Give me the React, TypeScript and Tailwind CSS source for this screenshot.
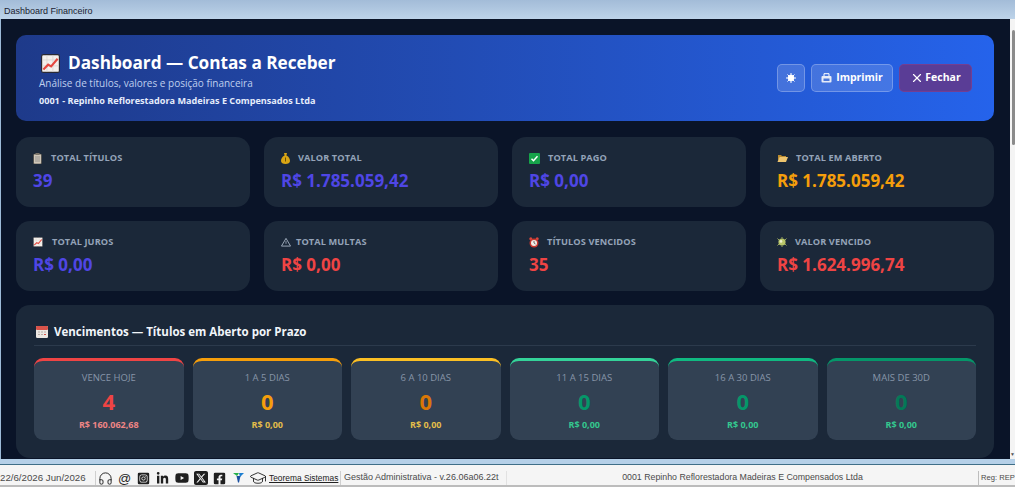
import { Headphones, GraduationCap, X } from 'lucide-react'
import { FaInstagramSquare, FaLinkedinIn, FaYoutube, FaFacebookSquare } from 'react-icons/fa'
import { FaSquareXTwitter } from 'react-icons/fa6'
import type { ReactNode } from 'react'

const ChartIcon = ({ size = 12 }: { size?: number }) => (
  <svg width={size} height={size} viewBox="0 0 16 16" className="shrink-0">
    <rect x="0.5" y="0.5" width="15" height="15" rx="1.5" fill="#f4f1ec" stroke="#2a2a33" />
    <path d="M5 1v14M10 1v14M1 5h14M1 10h14" stroke="#d8d4ce" strokeWidth="0.6" />
    <path d="M2 13l4-4 2.5 1.5L14 4" stroke="#e5483f" strokeWidth="1.8" fill="none" />
  </svg>
)

const ClipboardIcon = () => (
  <svg width="9" height="11" viewBox="0 0 9 11" className="shrink-0">
    <rect x="0.5" y="1" width="8" height="10" rx="1" fill="#cfc6b8" stroke="#3a3733" strokeWidth="0.6" />
    <rect x="2.5" y="0" width="4" height="2" fill="#7a7368" />
    <path d="M2 4h5M2 6h5M2 8h5" stroke="#7d7d7d" strokeWidth="0.7" />
  </svg>
)

const MoneyIcon = () => (
  <svg width="9" height="11" viewBox="0 0 9 11" className="shrink-0">
    <path d="M3 0h3L5.4 2.4C8 3.4 9 6 9 8c0 2-2 3-4.500 3S0 10 0 8c0-2 1-4.600 3.600-5.600z" fill="#d9a514" />
    <path d="M4.500 4.500v4" stroke="#6b4e05" strokeWidth="1" />
  </svg>
)

const CheckIcon = () => (
  <svg width="11" height="11" viewBox="0 0 11 11" className="shrink-0">
    <rect width="11" height="11" rx="1" fill="#16a34a" />
    <path d="M2.500 5.700l2 2 4-4.500" stroke="#fff" strokeWidth="1.500" fill="none" />
  </svg>
)

const FolderIcon = () => (
  <svg width="11" height="8" viewBox="0 0 11 8" className="shrink-0">
    <path d="M1 1h3l1 1h4v1H3L1 7z" fill="#b98a2e" />
    <path d="M2.500 3H11L9 8H0.500z" fill="#eec46e" />
  </svg>
)

const WarnIcon = () => (
  <svg width="10" height="10" viewBox="0 0 11 10" className="shrink-0">
    <path d="M5.500 1L10.500 9.500H0.500z" fill="none" stroke="#9aa6b6" strokeWidth="1.100" />
    <path d="M5.500 4v3" stroke="#9aa6b6" strokeWidth="1" />
  </svg>
)

const ClockIcon = () => (
  <svg width="10" height="11" viewBox="0 0 10 11" className="shrink-0">
    <circle cx="1.800" cy="1.800" r="1.500" fill="#d9453c" />
    <circle cx="8.200" cy="1.800" r="1.500" fill="#d9453c" />
    <circle cx="5" cy="6" r="4.500" fill="#c8382f" />
    <circle cx="5" cy="6" r="3" fill="#f2ece6" />
    <path d="M5 4v2l1.500 1" stroke="#333" strokeWidth="0.7" fill="none" />
  </svg>
)

const BugIcon = () => (
  <svg width="10" height="10" viewBox="0 0 10 10" className="shrink-0">
    <circle cx="5" cy="5" r="3.600" fill="#b9c66a" />
    <circle cx="4" cy="4.400" r="1.300" fill="#eef0cf" />
    <path d="M0.500 1.500l2 2M9.500 1.500l-2 2M0.500 8.500l2-2M9.500 8.500l-2-2M5 0v1.500M5 8.500V10" stroke="#b9c66a" strokeWidth="0.8" />
  </svg>
)

const CalendarIcon = () => (
  <svg width="12" height="12" viewBox="0 0 12 12" className="shrink-0">
    <rect width="12" height="12" rx="1.200" fill="#ece7e2" />
    <rect width="12" height="4" rx="1" fill="#d9534a" />
    <path d="M2 6h2M5 6h2M8 6h2M2 8.500h2M5 8.500h2" stroke="#b7aea8" strokeWidth="1" />
    <path d="M8 8.500h2" stroke="#d9534a" strokeWidth="1" />
  </svg>
)

const SunIcon = () => (
  <svg width="10" height="10" viewBox="0 0 10 10">
    <circle cx="5" cy="5" r="3.200" fill="#fff" />
    <path d="M5 0v10M0 5h10M1.500 1.500l7 7M8.500 1.500l-7 7" stroke="#fff" strokeWidth="1" />
  </svg>
)

const PrinterIcon = () => (
  <svg width="11" height="10" viewBox="0 0 11 10">
    <path d="M3 3V0.700h5V3" fill="none" stroke="#fff" strokeWidth="1" />
    <rect x="0.500" y="3" width="10" height="6.500" rx="1" fill="#e6ebf7" />
    <rect x="2.500" y="5.500" width="6" height="2.500" fill="#4a76d8" />
  </svg>
)

const FunnelIcon = () => (
  <svg width="11" height="10" viewBox="0 0 11 10">
    <path d="M0 0h6L4 3z" fill="#25b04a" />
    <path d="M6 0h5L7 4z" fill="#1d7fd1" />
    <path d="M3.500 3h4L6 9.500H5z" fill="#1a4fa0" />
  </svg>
)

const stats: { icon: ReactNode; label: string; value: string; color: string; gap: string }[] = [
  { icon: <ClipboardIcon />, label: 'Total Títulos', value: '39', color: 'text-[#4f46e5]', gap: 'gap-[9px]' },
  { icon: <MoneyIcon />, label: 'Valor Total', value: 'R$ 1.785.059,42', color: 'text-[#4f46e5]', gap: 'gap-[8px]' },
  { icon: <CheckIcon />, label: 'Total Pago', value: 'R$ 0,00', color: 'text-[#4f46e5]', gap: 'gap-[8px]' },
  { icon: <FolderIcon />, label: 'Total em Aberto', value: 'R$ 1.785.059,42', color: 'text-[#f59e0b]', gap: 'gap-[8px]' },
  { icon: <ChartIcon size={10} />, label: 'Total Juros', value: 'R$ 0,00', color: 'text-[#4f46e5]', gap: 'gap-[9px]' },
  { icon: <WarnIcon />, label: 'Total Multas', value: 'R$ 0,00', color: 'text-[#ef4444]', gap: 'gap-[5px]' },
  { icon: <ClockIcon />, label: 'Títulos Vencidos', value: '35', color: 'text-[#ef4444]', gap: 'gap-[8px]' },
  { icon: <BugIcon />, label: 'Valor Vencido', value: 'R$ 1.624.996,74', color: 'text-[#ef4444]', gap: 'gap-[8px]' },
]

const buckets = [
  { label: 'Vence Hoje', count: '4', amount: 'R$ 160.062,68', top: 'border-t-[#ef4444]', color: 'text-[#ef4444]', amountColor: 'text-[#ee8585]' },
  { label: '1 a 5 dias', count: '0', amount: 'R$ 0,00', top: 'border-t-[#f59e0b]', color: 'text-[#f59e0b]', amountColor: 'text-[#e3bd4a]' },
  { label: '6 a 10 dias', count: '0', amount: 'R$ 0,00', top: 'border-t-[#fbbf24]', color: 'text-[#d97706]', amountColor: 'text-[#e3bd4a]' },
  { label: '11 a 15 dias', count: '0', amount: 'R$ 0,00', top: 'border-t-[#34d399]', color: 'text-[#059669]', amountColor: 'text-[#34c88f]' },
  { label: '16 a 30 dias', count: '0', amount: 'R$ 0,00', top: 'border-t-[#10b981]', color: 'text-[#059669]', amountColor: 'text-[#34c88f]' },
  { label: 'Mais de 30d', count: '0', amount: 'R$ 0,00', top: 'border-t-[#059669]', color: 'text-[#047857]', amountColor: 'text-[#34c88f]' },
]

const socials: ReactNode[] = [
  <Headphones size={15} strokeWidth={1.5} />,
  <span className="text-[13px] leading-none">@</span>,
  <FaInstagramSquare size={13} />,
  <FaLinkedinIn size={13} />,
  <FaYoutube size={14} />,
  <FaSquareXTwitter size={16} />,
  <FaFacebookSquare size={13} />,
  <FunnelIcon />,
  <GraduationCap size={18} strokeWidth={1.2} />,
]

const StatCard = ({ icon, label, value, color, gap }: (typeof stats)[number]) => (
  <div className="h-[70px] rounded-[14px] bg-[#1b2839] px-[17px] pt-[14px]">
    <div className={`flex h-[14px] items-center ${gap}`}>
      {icon}
      <span className="text-[9.2px] font-bold uppercase tracking-[0.1px] text-[#94a3b8]">{label}</span>
    </div>
    <div className={`mt-[4px] text-[17px] font-bold leading-[24px] ${color}`}>{value}</div>
  </div>
)

const Bucket = ({ label, count, amount, top, color, amountColor }: (typeof buckets)[number]) => (
  <div className={`flex h-[82px] flex-1 flex-col items-center rounded-[9px] border-t-[3px] bg-[#324153] pt-[10px] ${top}`}>
    <span className="text-[9.5px] uppercase leading-[14px] text-[#8795a8]">{label}</span>
    <span className={`mt-[3px] text-[22px] font-bold leading-[26px] ${color}`}>{count}</span>
    <span className={`mt-[4px] text-[9px] font-bold leading-[14px] ${amountColor}`}>{amount}</span>
  </div>
)

const App = () => {
  return (
    <div className="flex h-[487px] w-[1015px] flex-col overflow-hidden bg-[#f3f3f3] font-['Open_Sans','Noto_Sans',sans-serif]">
      <div className="flex h-[19px] shrink-0 items-center bg-gradient-to-b from-[#a3bcd8] to-[#bdd3e9] pl-[4px] pt-[4px] font-['Liberation_Sans',sans-serif] text-[9px] text-[#1a2230]">
        Dashboard Financeiro
      </div>

      <div className="flex h-[440px] shrink-0 border-l border-l-[#9dbbd8] bg-[#f0f0f0]">
        <main className="flex min-w-0 flex-1 flex-col overflow-hidden bg-[#0a1428] pl-[15px] pr-[16px] pt-[16px]">
          <header className="mb-[16px] flex h-[86px] shrink-0 items-center justify-between rounded-[10px] bg-gradient-to-r from-[#1e3a8a] to-[#2563eb] pl-[23px] pr-[22px]">
            <div className="flex flex-col pt-[3px]">
              <h1 className="flex items-center gap-[8px] text-[17.2px] font-bold leading-[24px] text-white">
                <span className="ml-[2px] flex">
                  <ChartIcon size={19} />
                </span>
                Dashboard — Contas a Receber
              </h1>
              <p className="mt-[1px] text-[10px] leading-[14px] text-[#bfcfee]">Análise de títulos, valores e posição financeira</p>
              <p className="mt-[4px] text-[9.1px] font-bold leading-[14px] text-[#e6edfb]">0001 - Repinho Reflorestadora Madeiras E Compensados Ltda</p>
            </div>
            <div className="flex items-center gap-[6px] text-[10.5px] font-bold text-white">
              <button className="flex h-[28px] w-[28px] items-center justify-center rounded-[5px] border border-white/25 bg-white/15">
                <SunIcon />
              </button>
              <button className="flex h-[28px] w-[82px] items-center justify-center gap-[4px] rounded-[5px] border border-white/25 bg-white/15">
                <PrinterIcon />
                Imprimir
              </button>
              <button className="flex h-[28px] w-[73px] items-center justify-center gap-[1px] rounded-[5px] border border-[#7f3f8f]/70 bg-[#5a3d96]">
                <X size={14} strokeWidth={2} />
                Fechar
              </button>
            </div>
          </header>

          <div className="mb-[14px] grid shrink-0 grid-cols-4 gap-[14px]">
            {stats.map(s => (
              <StatCard key={s.label} {...s} />
            ))}
          </div>

          <section className="shrink-0 rounded-[14px] bg-[#1b2839] px-[18px] pt-[19px] pb-[18px]">
            <h2 className="flex items-center gap-[6px] border-b border-b-[#2c3a4c] pb-[5px] pl-[2px] text-[11.5px] font-bold leading-[16px] text-[#f1f5f9]">
              <CalendarIcon />
              Vencimentos — Títulos em Aberto por Prazo
            </h2>
            <div className="mt-[12px] flex gap-[9px]">
              {buckets.map(b => (
                <Bucket key={b.label} {...b} />
              ))}
            </div>
          </section>
        </main>

        <div className="flex w-[5px] shrink-0 flex-col items-end justify-between bg-[#f4f4f4] pt-[11px] pb-[2px]">
          <div className="h-[115px] w-[3px] rounded-sm bg-[#8b8b8b]" />
          <span className="text-[5px] leading-[6px] text-[#555]">▼</span>
        </div>
      </div>

      <div className="h-[6px] shrink-0 border-b border-b-[#3f6f88] bg-[#b5d0e8]" />

      <footer className="flex min-h-0 flex-1 items-center border-b-2 border-b-[#bcbcbc] bg-[#f5f5f5] pt-[6px] font-['Liberation_Sans',sans-serif] text-[9px] text-[#4a4a4a]">
        <span className="w-[95px] shrink-0 text-[9.7px] whitespace-nowrap">22/6/2026 Jun/2026</span>
        <div className="flex h-full items-center border-l border-l-[#cfcfcf] text-[#1f1f1f]">
          {socials.map((icon, i) => (
            <span key={i} className="flex w-[19px] items-center justify-center">
              {icon}
            </span>
          ))}
        </div>
        <span className="ml-[2px] w-[71px] shrink-0 text-[8.4px] whitespace-nowrap text-[#222] underline">Teorema Sistemas</span>
        <span className="flex h-full w-[166px] shrink-0 items-center border-l border-l-[#cfcfcf] pl-[3px] whitespace-nowrap">Gestão Administrativa - v.26.06a06.22t</span>
        <span className="flex h-full flex-1 items-center justify-center border-l border-l-[#e2e2e2] text-[8.8px] whitespace-nowrap">0001 Repinho Reflorestadora Madeiras E Compensados Ltda</span>
        <span className="flex h-full w-[37px] shrink-0 items-center border-l border-l-[#bdbdbd] pl-[2px] text-[7.6px] whitespace-nowrap">Reg: REP</span>
      </footer>
    </div>
  )
}

export default App
